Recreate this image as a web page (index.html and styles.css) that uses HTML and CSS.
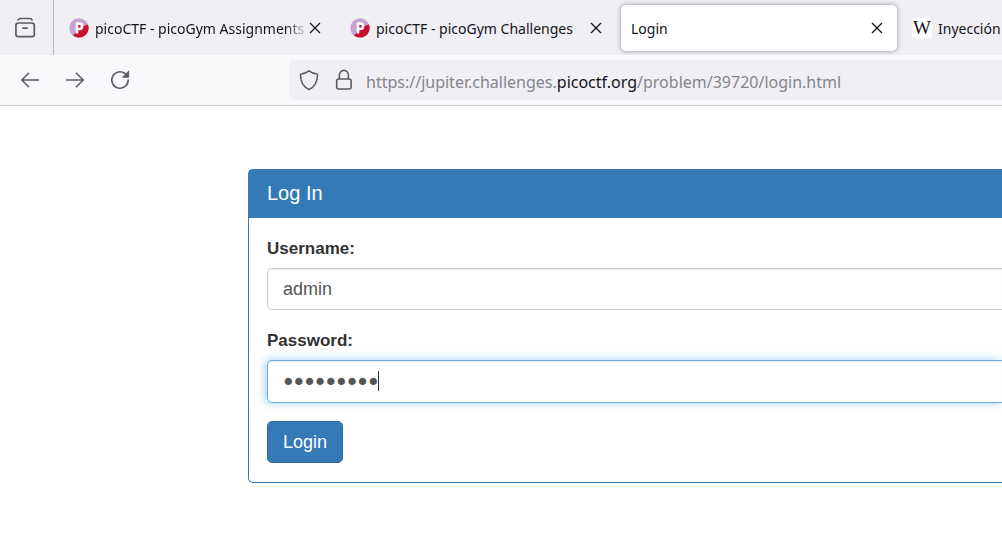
FILE: index.html
```html
<!DOCTYPE html>
<html lang="en">
<head>
<meta charset="utf-8">
<title>Login</title>
<link rel="stylesheet" href="styles.css">
</head>
<body>
<svg class="sprite" aria-hidden="true">
  <symbol id="pico" viewBox="0 0 20 20">
    <circle cx="10" cy="10" r="9.7" fill="#c8a2d0"/>
    <path d="M19 6.500A9.700 9.700 0 0 1 3.900 17.500L8 13.500V10L13 8.500Z" fill="#c8102e"/>
    <path d="M8 15.500V5.600h2.400a2.700 2.700 0 0 1 0 5.400H8" fill="#c8102e" stroke="#fff" stroke-width="2.600"/>
  </symbol>
  <symbol id="close" viewBox="0 0 12 12">
    <path d="M1 1l10 10M11 1L1 11" fill="none" stroke="#15141a" stroke-width="1.3"/>
  </symbol>
</svg>
<header>
  <nav class="tabs" aria-label="Tabs">
    <button class="icon-button view" aria-label="Recent browsing">
      <svg width="22" height="22" viewBox="0 0 22 22" fill="none" stroke="#5b5b66" stroke-width="1.7" stroke-linecap="round"><rect x="1.9" y="6" width="18.4" height="13.6" rx="2.4"/><path d="M4.2 2.9C4.7 1.9 5.3 1.5 6.3 1.5h9.6c1 0 1.6.4 2.1 1.4M9 11.2h4"/></svg>
    </button>
    <div class="tab">
      <svg class="favicon"><use href="#pico"/></svg>
      <a class="title faded" href="#">picoCTF - picoGym Assignments</a>
      <button class="icon-button" aria-label="Close tab"><svg class="close"><use href="#close"/></svg></button>
    </div>
    <div class="tab">
      <svg class="favicon"><use href="#pico"/></svg>
      <a class="title" href="#">picoCTF - picoGym Challenges</a>
      <button class="icon-button" aria-label="Close tab"><svg class="close"><use href="#close"/></svg></button>
    </div>
    <div class="tab active">
      <a class="title" href="#">Login</a>
      <button class="icon-button" aria-label="Close tab"><svg class="close"><use href="#close"/></svg></button>
    </div>
    <div class="tab last">
      <span class="wiki">W</span>
      <a class="title" href="#">Inyección</a>
    </div>
  </nav>
  <div class="toolbar">
    <div class="history">
      <button class="icon-button" aria-label="Back"><svg width="20" height="20" viewBox="0 0 20 20" fill="none" stroke="#5b5b66" stroke-width="1.6" stroke-linecap="round" stroke-linejoin="round"><path d="M18.4 10H2M8.6 3.2L1.8 10l6.8 6.8"/></svg></button>
      <button class="icon-button" aria-label="Forward"><svg width="20" height="20" viewBox="0 0 20 20" fill="none" stroke="#5b5b66" stroke-width="1.6" stroke-linecap="round" stroke-linejoin="round"><path d="M1.6 10H18M11.4 3.2l6.8 6.8-6.8 6.8"/></svg></button>
      <button class="icon-button" aria-label="Reload"><svg width="20" height="20" viewBox="0 0 20 20" fill="none" stroke="#5b5b66" stroke-width="1.6" stroke-linecap="round"><path d="M18.2 10a8.2 8.2 0 1 1-3-6.3l1.2 1.2"/><path d="M18.6 1.6v5.6H13Z" fill="#5b5b66" stroke-width="1" stroke-linejoin="round"/></svg></button>
    </div>
    <div class="address">
      <svg width="20" height="22" viewBox="0 0 20 22" fill="none" stroke="#5b5b66" stroke-width="1.6" stroke-linejoin="round"><path d="M10 1.9C8 3.4 5 4.8 2.3 5c-.5 0-.8.4-.8.9C1.6 12 4.2 17.8 10 20.4 15.8 17.8 18.4 12 18.5 5.9c0-.5-.3-.9-.8-.9C15 4.8 12 3.4 10 1.9Z"/></svg>
      <svg width="19" height="22" viewBox="-2 0 19 22" fill="none" stroke="#5b5b66" stroke-width="1.6"><rect x="1.7" y="10" width="14.4" height="10" rx="2"/><path d="M4.4 10V5.9a4.5 4.5 0 0 1 9 0V10"/></svg>
      <span class="url">https://jupiter.challenges.<span class="domain">picoctf.org</span>/problem/39720/login.html</span>
    </div>
  </div>
</header>
<main>
  <section class="panel">
    <h1>Log In</h1>
    <form>
      <label for="username">Username:</label>
      <input id="username" type="text" value="admin">
      <label for="password">Password:</label>
      <div class="field">
        <input id="password" class="focused" type="password" value="ninechars">
        <span class="caret"></span>
      </div>
      <button class="submit" type="button">Login</button>
    </form>
  </section>
</main>
</body>
</html>
```
FILE: styles.css
```css
* { box-sizing: border-box; }
body {
  margin: 0;
  background: #fff;
  color: #333;
  font-family: "Liberation Sans", Arial, sans-serif;
}
svg { display: block; flex: none; }
.sprite { position: absolute; width: 0; height: 0; }
.icon-button {
  display: block;
  flex: none;
  padding: 0;
  border: 0;
  background: none;
}
.tabs {
  display: flex;
  align-items: center;
  gap: 5px;
  height: 55px;
  overflow: hidden;
  background: #f0eff4;
  font-family: "Noto Sans", "Open Sans", sans-serif;
}
.view {
  align-self: stretch;
  width: 54px;
  padding-left: 14px;
  border-right: 1px solid #b4b4bb;
}
.tab {
  display: flex;
  flex: none;
  align-items: center;
  width: 276px;
  height: 46px;
  padding: 0 14px 0 10px;
  border-radius: 5px;
}
.tab.last { flex: 1; width: auto; min-width: 0; padding-right: 0; }
.active { background: #fff; box-shadow: 0 0 5px rgba(0, 0, 0, 0.4); }
.favicon { width: 20px; height: 20px; margin-right: 6px; }
.title {
  flex: 1;
  padding-top: 2px;
  overflow: hidden;
  color: #15141a;
  font-size: 14px;
  line-height: 24px;
  text-decoration: none;
  white-space: nowrap;
}
.faded { mask-image: linear-gradient(to left, transparent, #000 24px); }
.close { width: 12px; height: 12px; }
.wiki {
  flex: none;
  width: 20px;
  margin-right: 6px;
  border-radius: 3px;
  background: #fff;
  color: #111;
  font: 19px/20px "Liberation Serif", serif;
  text-align: center;
}
.toolbar {
  display: flex;
  align-items: center;
  height: 51px;
  border-bottom: 1px solid #ccccd1;
  background: #f9f9fb;
}
.history { display: flex; flex: none; gap: 25px; width: 289px; padding-left: 20px; }
.address {
  display: flex;
  flex: 1;
  align-items: center;
  gap: 14px;
  height: 40px;
  padding-left: 10px;
  border-radius: 5px 0 0 5px;
  background: #f0eff4;
}
.url {
  padding-top: 3px;
  color: #85858c;
  font-family: "Noto Sans", "Open Sans", sans-serif;
  font-size: 16px;
  line-height: 24px;
  white-space: nowrap;
}
.domain { color: #15141a; }
main { padding: 63px 0 60px 248px; }
.panel {
  border: 1px solid #337ab7;
  border-right: 0;
  border-radius: 5px 0 0 5px;
}
.panel h1 {
  margin: 0;
  padding: 11px 18px 13px;
  background: #337ab7;
  color: #fff;
  font-size: 20px;
  font-weight: 400;
  line-height: 24px;
}
form { padding: 18px 0 19px 18px; }
label {
  display: block;
  margin-bottom: 6px;
  font-size: 17px;
  font-weight: 700;
  line-height: 26px;
}
input {
  display: block;
  width: 100%;
  height: 42px;
  margin-bottom: 18px;
  padding: 0 15px;
  border: 1px solid #ccc;
  border-right: 0;
  border-radius: 5px 0 0 5px;
  outline: 0;
  background: #fff;
  box-shadow: inset 0 1px 1px rgba(0, 0, 0, 0.075);
  color: #555;
  font-family: "Liberation Sans", Arial, sans-serif;
  font-size: 18px;
}
.field { position: relative; }
input.focused {
  height: 43px;
  border-color: #66afe9;
  box-shadow: inset 0 1px 1px rgba(0, 0, 0, 0.075), -2px 0 10px rgba(102, 175, 233, 0.6);
  font-family: "DejaVu Sans", sans-serif;
  -webkit-text-stroke: 2px #555;
}
.caret {
  position: absolute;
  top: 11px;
  left: 111px;
  width: 1px;
  height: 20px;
  background: #333;
}
.submit {
  display: block;
  height: 42px;
  padding: 0 15px;
  border: 1px solid #2e6da4;
  border-radius: 5px;
  background: #337ab7;
  color: #fff;
  font-family: "Liberation Sans", Arial, sans-serif;
  font-size: 18px;
}
```
